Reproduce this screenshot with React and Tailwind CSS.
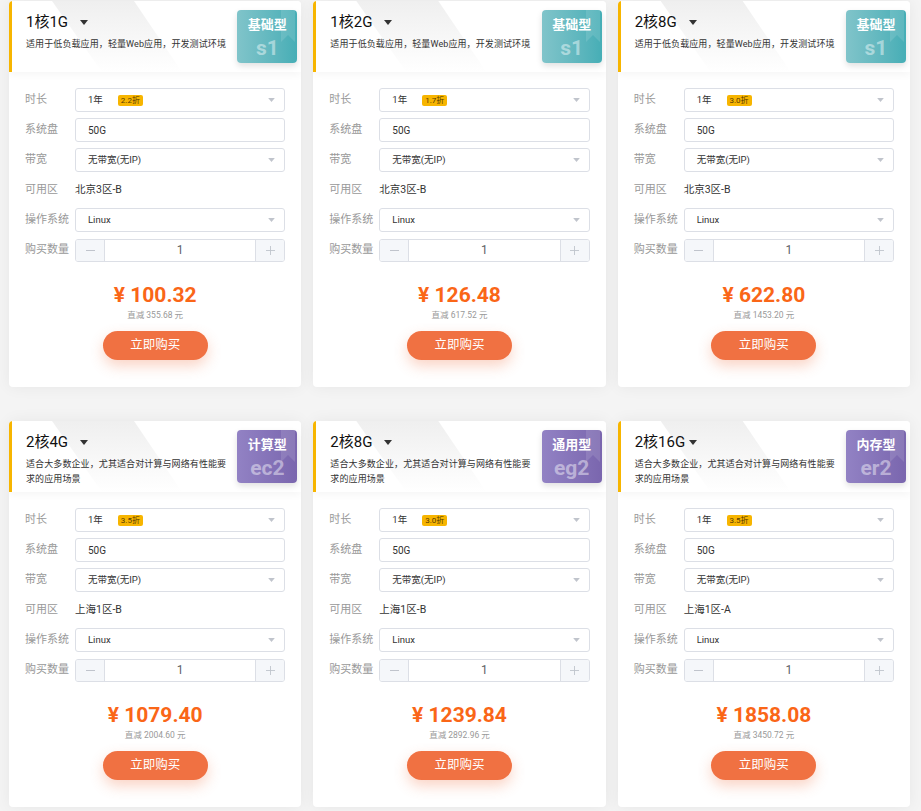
import { useState } from 'react'

const descBasic = ['适用于低负载应用，轻量Web应用，开发测试环境']
const descPro = ['适合大多数企业，尤其适合对计算与网络有性能要', '求的应用场景']

const plans = [
  { spec: '1核1G', desc: descBasic, type: '基础型', code: 's1', tone: 'teal', off: '2.2折', zone: '北京3区-B', price: '100.32', saved: '355.68' },
  { spec: '1核2G', desc: descBasic, type: '基础型', code: 's1', tone: 'teal', off: '1.7折', zone: '北京3区-B', price: '126.48', saved: '617.52' },
  { spec: '2核8G', desc: descBasic, type: '基础型', code: 's1', tone: 'teal', off: '3.0折', zone: '北京3区-B', price: '622.80', saved: '1453.20' },
  { spec: '2核4G', desc: descPro, type: '计算型', code: 'ec2', tone: 'purple', off: '3.5折', zone: '上海1区-B', price: '1079.40', saved: '2004.60' },
  { spec: '2核8G', desc: descPro, type: '通用型', code: 'eg2', tone: 'purple', off: '3.0折', zone: '上海1区-B', price: '1239.84', saved: '2892.96' },
  { spec: '2核16G', desc: descPro, type: '内存型', code: 'er2', tone: 'purple', off: '3.5折', zone: '上海1区-A', price: '1858.08', saved: '3450.72' },
]

const font = { fontFamily: 'Roboto, "Noto Sans CJK SC", sans-serif' }

function Caret({ className }) {
  return (
    <svg viewBox="0 0 10 6" className={className} aria-hidden="true">
      <path d="M0 0h10L5 6z" fill="currentColor" />
    </svg>
  )
}

function TypeBadge({ type, code, tone }) {
  const bg = tone === 'teal'
    ? 'bg-gradient-to-r from-[#80c4ca] to-[#46aeb6]'
    : 'bg-gradient-to-r from-[#9282c4] to-[#7a66ae]'
  return (
    <div className={`absolute right-[4px] top-[9px] w-[60px] h-[53px] rounded-[4px] overflow-hidden shadow-[0_3px_6px_rgba(0,0,0,0.12)] ${bg}`}>
      <svg viewBox="0 0 14 32" className="absolute right-[2px] top-0 w-[14px] h-[32px]" aria-hidden="true">
        <path d="M0 0h14v32L7 25 0 32z" fill="rgba(255,255,255,0.12)" />
      </svg>
      <div className="relative flex flex-col items-center pt-[5px]">
        <span className="text-[13px] font-bold text-white leading-[20px]">{type}</span>
        <span className="text-[21px] font-bold text-white/45 leading-[26px]">{code}</span>
      </div>
    </div>
  )
}

function Select({ children }) {
  return (
    <div className="flex-1 h-[24px] border border-[#dcdfe6] rounded-[3px] flex items-center pl-[12px] pr-[9px] bg-white">
      <div className="flex-1 flex items-center text-[9.5px] text-[#333]">{children}</div>
      <Caret className="w-[7px] h-[4px] text-[#c0c4cc]" />
    </div>
  )
}

function Row({ label, children }) {
  return (
    <div className="flex items-center h-[24px]">
      <span className="w-[50px] text-[11px] text-[#999]">{label}</span>
      {children}
    </div>
  )
}

function Stepper() {
  const [n, setN] = useState(1)
  return (
    <div className="flex-1 h-[23px] border border-[#dcdfe6] rounded-[3px] flex overflow-hidden">
      <button
        className="w-[29px] bg-[#f5f7fa] border-r border-[#dcdfe6] flex items-center justify-center"
        onClick={() => setN(Math.max(1, n - 1))}
      >
        <span className="block w-[9px] h-px bg-[#c0c4cc]" />
      </button>
      <div className="flex-1 flex items-center justify-center text-[12px] text-[#606266]">{n}</div>
      <button
        className="w-[29px] bg-[#f5f7fa] border-l border-[#dcdfe6] flex items-center justify-center"
        onClick={() => setN(n + 1)}
      >
        <svg viewBox="0 0 10 10" className="w-[9px] h-[9px]" aria-hidden="true">
          <path d="M5 0v10M0 5h10" stroke="#c0c4cc" strokeWidth="1" />
        </svg>
      </button>
    </div>
  )
}

function PlanCard({ plan }) {
  return (
    <div className="bg-white rounded-[4px] shadow-[0_0_16px_rgba(0,0,0,0.06)] h-[386px] flex flex-col overflow-hidden">
      {/* Header */}
      <div className="relative h-[71px] border-l-[3px] border-[#f7b500] bg-white shadow-[0_3px_8px_rgba(0,0,0,0.04)] z-10 shrink-0">
        <div className="absolute left-[40px] top-0 w-[130px] h-[71px] [clip-path:polygon(0_0,82px_0,130px_71px,50px_71px)] bg-gradient-to-b from-[#efefef] to-white" />
        <div className="relative pl-[14px] pt-[10px]">
          <div className="flex items-center h-[22px]">
            <span className="min-w-[50px] text-[15px] text-[#111]">{plan.spec}</span>
            <Caret className="ml-[4px] w-[8px] h-[5px] text-[#333]" />
          </div>
          <p className="mt-[4px] text-[9px] tracking-[0.1px] leading-[15px] text-[#333]">
            {plan.desc.map((line, i) => (
              <span key={i} className="block whitespace-nowrap">{line}</span>
            ))}
          </p>
        </div>
        <TypeBadge type={plan.type} code={plan.code} tone={plan.tone} />
      </div>

      {/* Body */}
      <div className="flex-1 flex flex-col px-[16px] pt-[16px]">
        <div className="flex flex-col gap-[6px]">
          <Row label="时长">
            <Select>
              <span>1年</span>
              <span className="ml-[15px] px-[3px] h-[11px] leading-[11px] rounded-[2px] bg-[#f7b500] text-[8px] text-[#5a3b00]">{plan.off}</span>
            </Select>
          </Row>
          <Row label="系统盘">
            <div className="flex-1 h-[24px] border border-[#dcdfe6] rounded-[3px] flex items-center pl-[12px] text-[10px] text-[#333]">50G</div>
          </Row>
          <Row label="带宽">
            <Select>无带宽(无IP)</Select>
          </Row>
          <Row label="可用区">
            <span className="text-[10.5px] text-[#333]">{plan.zone}</span>
          </Row>
          <Row label="操作系统">
            <Select>Linux</Select>
          </Row>
          <Row label="购买数量">
            <Stepper />
          </Row>
        </div>

        <div className="flex flex-col items-center mt-[20px]">
          <span className="text-[21px] font-bold leading-[26px] text-[#fa6617]">¥ {plan.price}</span>
          <span className="text-[8.5px] text-[#999] leading-[14px]">直减 {plan.saved} 元</span>
          <button className="mt-[9px] w-[105px] h-[29px] rounded-full bg-[#f07142] text-white text-[12.5px] shadow-[0_6px_14px_rgba(240,113,66,0.3)]">
            立即购买
          </button>
        </div>
      </div>
    </div>
  )
}

export default function App() {
  return (
    <div className="min-h-[811px] bg-[#f4f4f4] pl-[9px] pr-[11px] pt-px" style={font}>
      <div className="grid grid-cols-3 gap-x-[12px] gap-y-[34px]">
        {plans.map((p, i) => (
          <PlanCard key={i} plan={p} />
        ))}
      </div>
    </div>
  )
}
